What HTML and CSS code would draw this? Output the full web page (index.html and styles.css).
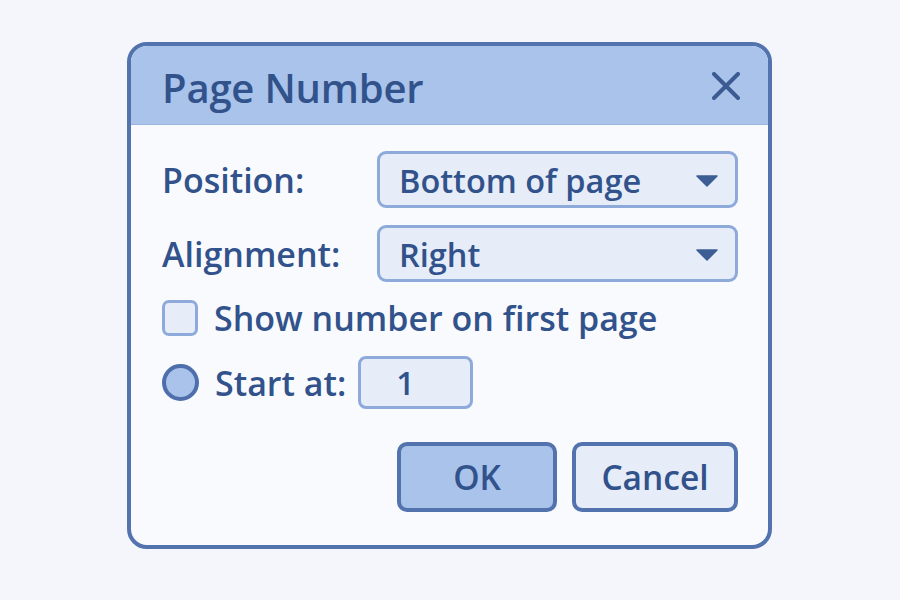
FILE: index.html
```html
<!DOCTYPE html>
<html>
<head>
<meta charset="utf-8">
<link rel="stylesheet" href="styles.css">
</head>
<body>
<div class="dialog">
  <div class="header">
    <span class="title">Page Number</span>
    <svg class="close" width="30" height="28" viewBox="0 0 30 28"><path d="M3 2 L27 26 M27 2 L3 26" stroke="#3b5b92" stroke-width="4" stroke-linecap="round" fill="none"/></svg>
  </div>
  <div class="body">
    <div class="row">
      <span class="label">Position:</span>
      <div class="select"><span>Bottom of page</span><svg class="arrow" width="22" height="12" viewBox="0 0 22 12"><path d="M1 1 H21 L11 11 Z" fill="#3d5d95" stroke="#3d5d95" stroke-width="1.5" stroke-linejoin="round"/></svg></div>
    </div>
    <div class="row row2">
      <span class="label">Alignment:</span>
      <div class="select"><span>Right</span><svg class="arrow" width="22" height="12" viewBox="0 0 22 12"><path d="M1 1 H21 L11 11 Z" fill="#3d5d95" stroke="#3d5d95" stroke-width="1.5" stroke-linejoin="round"/></svg></div>
    </div>
    <div class="check-row">
      <span class="checkbox"></span>
      <span class="text">Show number on first page</span>
    </div>
    <div class="radio-row">
      <span class="radio"></span>
      <span class="text">Start at:</span>
      <div class="num">1</div>
    </div>
    <div class="buttons">
      <div class="btn ok">OK</div>
      <div class="btn cancel">Cancel</div>
    </div>
  </div>
</div>
</body>
</html>
```
FILE: styles.css
```css
html, body {
  margin: 0;
  padding: 0;
  background: #f4f6fc;
  width: 900px;
  height: 600px;
  overflow: hidden;
}
body {
  padding: 42px 0 0 127px;
  box-sizing: border-box;
  font-family: "Open Sans", "Noto Sans", sans-serif;
  font-weight: 600;
  color: #31528a;
}
.dialog {
  width: 645px;
  height: 507px;
  box-sizing: border-box;
  border: 4px solid #5273ad;
  border-radius: 20px;
  background: #f9fafe;
  overflow: hidden;
}
.header {
  height: 79px;
  box-sizing: border-box;
  background: #a9c3ea;
  border-bottom: 1px solid #9ab4df;
  display: flex;
  align-items: center;
  justify-content: space-between;
  padding: 4px 27px 0 31px;
}
.title {
  font-size: 40px;
  letter-spacing: -0.2px;
}
.close { display: block; margin-top: -2px; }
.body {
  padding: 26px 30px 0 31px;
}
.row {
  display: flex;
  align-items: center;
}
.row2 { margin-top: 17px; }
.label {
  flex: 0 0 215px;
  font-size: 34px;
}
.select {
  flex: 1;
  height: 57px;
  box-sizing: border-box;
  border: 3px solid #8eaadb;
  border-radius: 9px;
  background: #e6ecf8;
  display: flex;
  align-items: center;
  justify-content: space-between;
  padding: 2px 17px 0 19px;
  font-size: 32.5px;
}
.arrow { display: block; }
.check-row {
  display: flex;
  align-items: center;
  margin-top: 18px;
  height: 36px;
}
.checkbox {
  width: 36px;
  height: 36px;
  box-sizing: border-box;
  border: 3px solid #8eaadb;
  border-radius: 7px;
  background: #e6ecf8;
  flex: none;
}
.text {
  font-size: 34px;
  margin-left: 16px;
}
.radio-row {
  display: flex;
  align-items: center;
  margin-top: 20px;
  height: 53px;
}
.radio {
  width: 37px;
  height: 37px;
  box-sizing: border-box;
  border: 4px solid #4e6fab;
  border-radius: 50%;
  background: #a9c3ea;
  flex: none;
}
.num {
  margin-left: 12px;
  width: 115px;
  height: 53px;
  box-sizing: border-box;
  border: 3px solid #8eaadb;
  border-radius: 8px;
  background: #e6ecf8;
  font-size: 32px;
  display: flex;
  align-items: center;
  padding-left: 35px;
}
.buttons {
  display: flex;
  justify-content: flex-end;
  gap: 15px;
  margin-top: 33px;
}
.btn {
  height: 70px;
  box-sizing: border-box;
  border: 4px solid #5273ad;
  border-radius: 10px;
  display: flex;
  align-items: center;
  justify-content: center;
  font-size: 33.5px;
}
.ok { width: 160px; background: #a9c3ea; }
.cancel { width: 166px; background: #e6ecf8; }
```
